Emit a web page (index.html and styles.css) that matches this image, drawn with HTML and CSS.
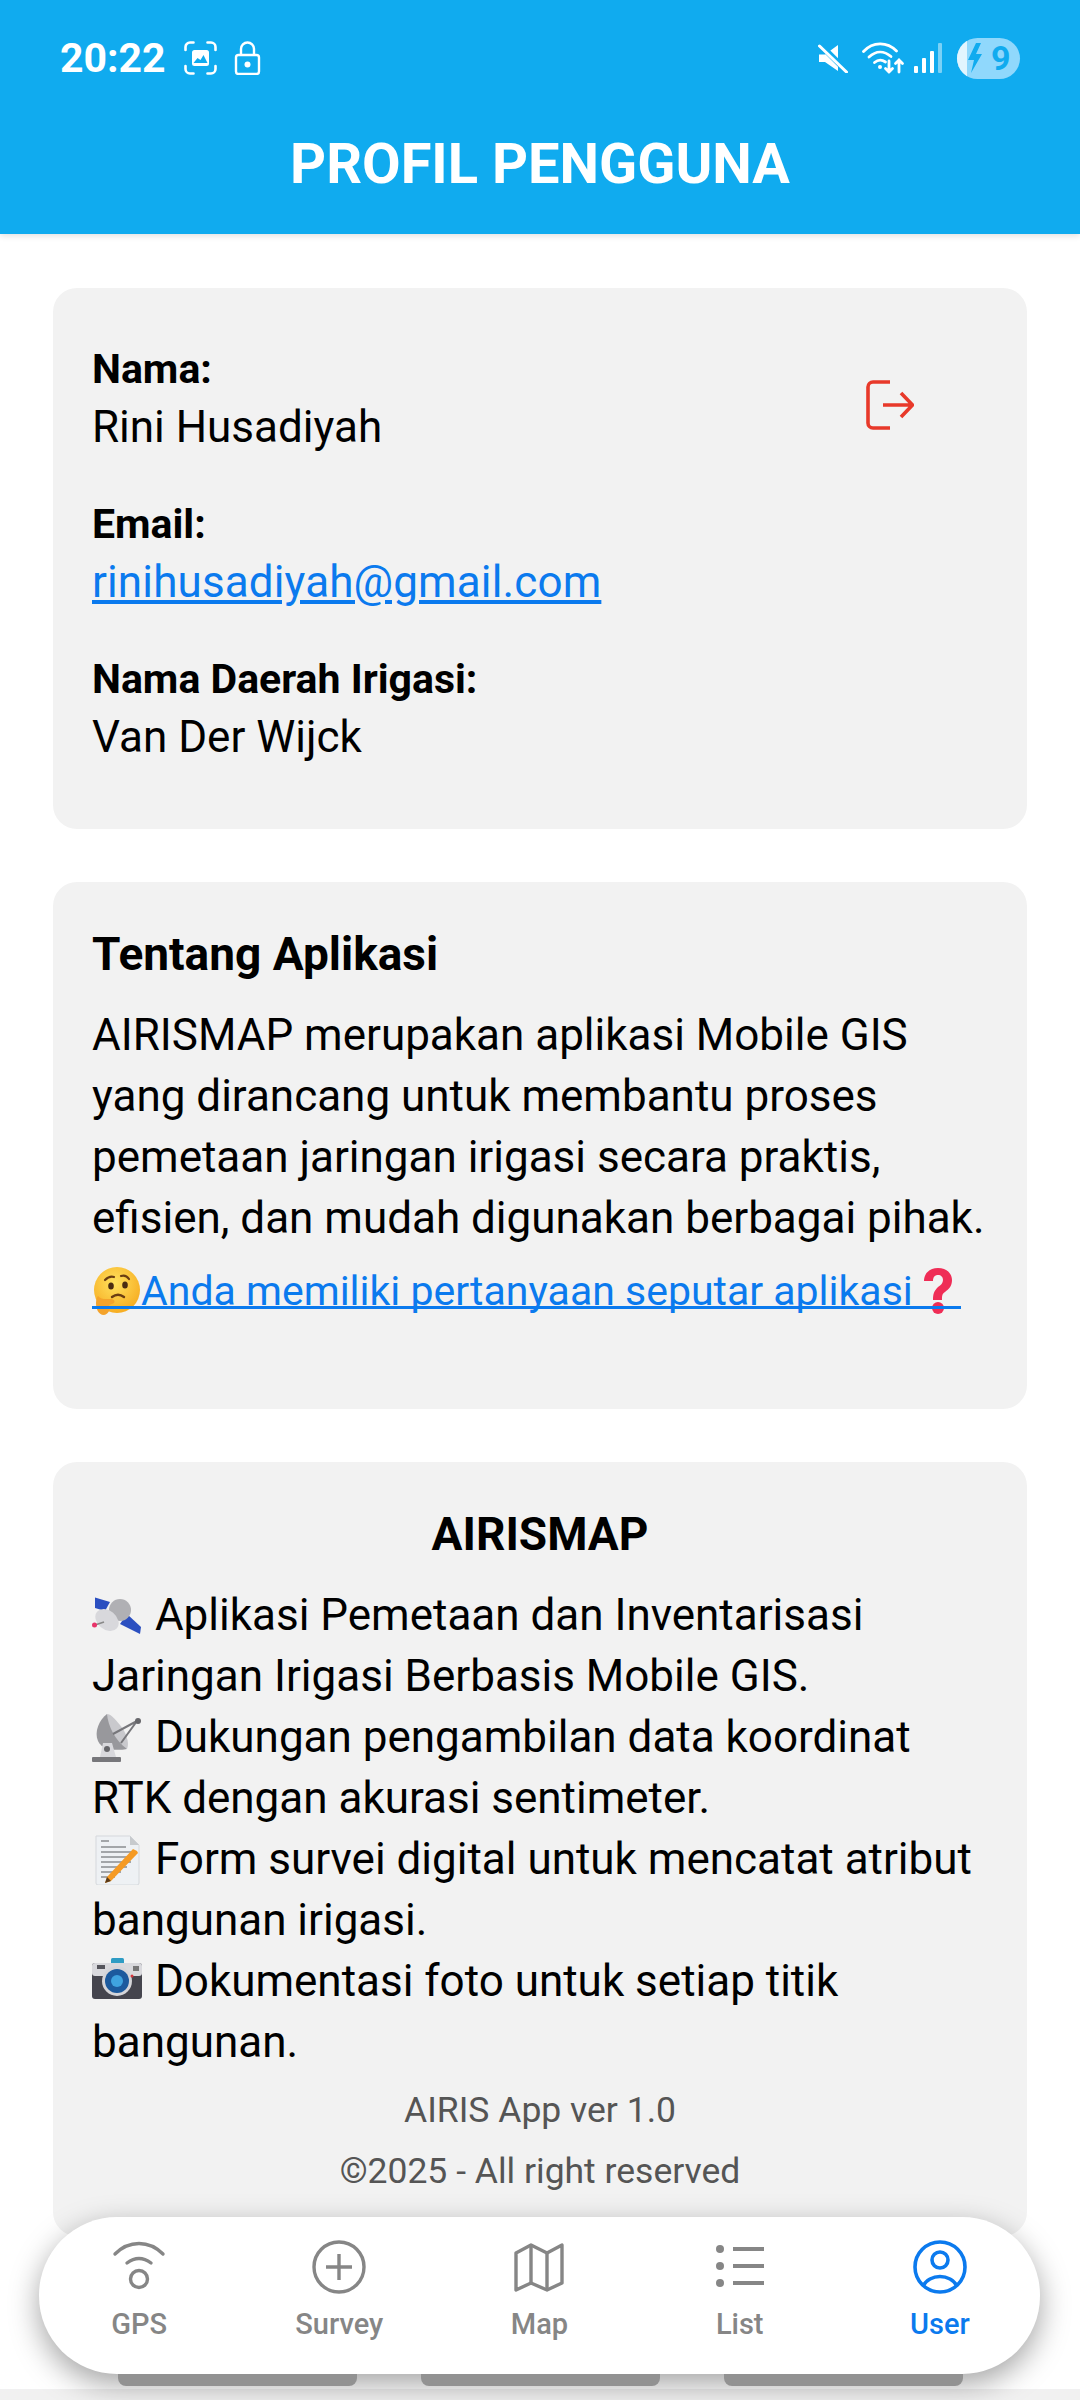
FILE: index.html
```html
<!DOCTYPE html>
<html lang="en">
<head>
    <meta charset="UTF-8">
    <meta name="viewport" content="width=device-width, initial-scale=1.0">
    <title>Profil Pengguna</title>
    <link rel="stylesheet" href="styles.css">
</head>
<body>
<div class="app">
    <header class="header">
        <div class="status-bar">
            <div class="status-left">
                <span class="time">20:22</span>
                <svg class="ic-scan" width="35" height="34" viewBox="0 0 34 34" fill="none" stroke="#fff" stroke-width="2.6" stroke-linecap="round">
                    <path d="M2 9V6a4.500 4.500 0 0 1 4.500-4.500H10M24 1.500h3.500A4.500 4.500 0 0 1 32 6v3M32 25v3a4.500 4.500 0 0 1-4.500 4.500H24M10 32.500H6.500A4.500 4.500 0 0 1 2 28v-3"/>
                    <rect x="8.500" y="9" width="17" height="16" rx="2.500" fill="#fff" stroke="none"/>
                    <path d="M10 22l4-5 3 2 3-5 4 8z" fill="#10abef" stroke="none"/>
                </svg>
                <svg class="ic-lock" width="27" height="34" viewBox="0 0 26 34" fill="none" stroke="#fff" stroke-width="2.4">
                    <path d="M6.500 14V8a6.500 6.500 0 0 1 13 0v6"/>
                    <rect x="1.500" y="14" width="23" height="19" rx="2.500"/>
                    <circle cx="13" cy="23.500" r="3" fill="#fff" stroke="none"/>
                </svg>
            </div>
            <div class="status-right">
                <svg width="30" height="30" viewBox="0 0 30 30">
                    <path d="M1 11.500h6L20 2v26L7 19H1z" fill="#fff"/>
                    <path d="M2 1.500L29 28.500" stroke="#10abef" stroke-width="6"/>
                    <path d="M1.500 3L28.500 29" stroke="#fff" stroke-width="3" stroke-linecap="round"/>
                </svg>
                <svg class="ic-wifi" width="43" height="32" viewBox="0 0 43 32" fill="none" stroke="#fff" stroke-width="2.800" stroke-linecap="round">
                    <path d="M1.500 9.500C11 -0.500 25 -0.500 34.500 9"/>
                    <path d="M7 15c7-6.500 15-6.500 22-0.500"/>
                    <path d="M12.500 20.500c3.500-3 7.500-3 11-0.500"/>
                    <circle cx="18" cy="25" r="2" fill="#fff" stroke="none"/>
                    <path d="M27 19v11M23.500 26.500L27 30l3.500-3.500M37 30V18M33.500 21.500L37 18l3.500 3.500"/>
                </svg>
                <svg class="ic-signal" width="28" height="30" viewBox="0 0 28 30">
                    <rect x="0" y="23" width="4" height="7" rx="1" fill="#fff"/>
                    <rect x="8" y="15" width="4" height="15" rx="1" fill="#fff"/>
                    <rect x="16" y="8" width="4" height="22" rx="1" fill="#fff"/>
                    <rect x="24" y="0" width="4" height="30" rx="1" fill="#fff" opacity=".45"/>
                </svg>
                <div class="battery">
                    <span class="battery-level"></span>
                    <svg class="ic-bolt" width="16" height="30" viewBox="0 0 16 30"><path d="M9 0L1 17h6l-3 13L15 11H9l5-11z" fill="#10abef"/></svg>
                    <span class="battery-num">9</span>
                </div>
            </div>
        </div>
        <h1 class="title">PROFIL PENGGUNA</h1>
    </header>

    <main class="content">
        <section class="card card-user">
            <div class="user-info">
                <div class="field">
                    <strong>Nama:</strong>
                    <span>Rini Husadiyah</span>
                </div>
                <div class="field">
                    <strong>Email:</strong>
                    <a href="#">rinihusadiyah@gmail.com</a>
                </div>
                <div class="field">
                    <strong>Nama Daerah Irigasi:</strong>
                    <span>Van Der Wijck</span>
                </div>
            </div>
            <svg class="ic-logout" width="48" height="50" viewBox="0 0 48 50" fill="none" stroke="#e8392a" stroke-width="3.600" stroke-linejoin="round">
                <path d="M24 2H7a5 5 0 0 0-5 5v36a5 5 0 0 0 5 5h17"/>
                <path d="M17 25h29M35 13l11.500 12L35 37"/>
            </svg>
        </section>

        <section class="card card-about">
            <h2>Tentang Aplikasi</h2>
            <p>AIRISMAP merupakan aplikasi Mobile GIS yang dirancang untuk membantu proses pemetaan jaringan irigasi secara praktis, efisien, dan mudah digunakan berbagai pihak.</p>
            <a class="faq" href="#"><svg class="emoji-think" width="49" height="48" viewBox="0 0 49 48">
                    <defs><radialGradient id="face" cx=".45" cy=".35" r=".7"><stop offset="0" stop-color="#ffe25e"/><stop offset="1" stop-color="#f6a91e"/></radialGradient></defs>
                    <circle cx="25" cy="23" r="23" fill="url(#face)"/>
                    <path d="M13 13c3-3 6-4 9-3M29 9c3-1 6 0 8 3" stroke="#6b3d12" stroke-width="2.200" fill="none" stroke-linecap="round"/>
                    <ellipse cx="19" cy="19" rx="2.800" ry="3.500" fill="#4a2c12"/>
                    <ellipse cx="33" cy="18" rx="2.800" ry="3.500" fill="#4a2c12"/>
                    <path d="M20 30c4-3 8-3 12 0" stroke="#6b3d12" stroke-width="2.400" fill="none" stroke-linecap="round"/>
                    <path d="M6 29c3 4 8 3 13 3 4 0 5 4 1 5l-3 1c2 3 0 9-5 10-6 0-8-7-8-12 0-3 1-6 2-7z" fill="#f4a32b"/>
                </svg>Anda memiliki pertanyaan seputar aplikasi <svg class="emoji-q" width="30" height="48" viewBox="0 0 30 48">
                    <path d="M1 14C1 6 7 1 15 1c8 0 14 5 14 12 0 6-3 9-7 12-3 2-3 4-3 8h-9c0-6 1-9 5-13 3-2 5-4 5-7s-2-5-5-5-5 2-5 6z" fill="#ef2d56"/>
                    <circle cx="15" cy="41" r="6" fill="#ef2d56"/>
                </svg></a>
        </section>

        <section class="card card-app">
            <h2 class="center">AIRISMAP</h2>
            <p><svg class="emoji" viewBox="0 0 50 50">
                    <path d="M3 6.500L18 11l-5 9-10-3z" fill="#2b4fc0"/>
                    <path d="M35 23l14 13-1 7-20-10z" fill="#2b4fc0"/>
                    <circle cx="28" cy="19" r="11" fill="#b0b0b4"/>
                    <ellipse cx="15" cy="29" rx="13" ry="9.500" transform="rotate(40 15 29)" fill="#d8d8dc"/>
                    <path d="M12 31L3 34" stroke="#888" stroke-width="1.600"/>
                    <circle cx="2.500" cy="34" r="2.500" fill="#e8346a"/>
                </svg> Aplikasi Pemetaan dan Inventarisasi Jaringan Irigasi Berbasis Mobile GIS.</p>
            <p><svg class="emoji" viewBox="0 0 50 50">
                    <path d="M15 1c-8 6-13 18-9 27s18 10 29 8z" fill="#98989c"/>
                    <path d="M15 1c1 12 8 26 20 35 3-6-1-17-7-24S19 1 15 1z" fill="#c9c9cd"/>
                    <path d="M21 21L45 8M29 30L45 8" stroke="#77777b" stroke-width="2"/>
                    <circle cx="46" cy="8" r="3" fill="#66666a"/>
                    <path d="M11 30h9l4 14H8z" fill="#d8d8dc"/>
                    <circle cx="15" cy="36" r="3" fill="#66666a"/>
                    <rect x="0" y="44" width="29" height="5" rx="1" fill="#77777b"/>
                </svg> Dukungan pengambilan data koordinat RTK dengan akurasi sentimeter.</p>
            <p><svg class="emoji" viewBox="0 0 50 50">
                    <path d="M4 1h34l9 9v38a2 2 0 0 1-2 2H6a2 2 0 0 1-2-2z" fill="#eef1f4" stroke="#d5d8dc"/>
                    <path d="M38 1l9 9h-9z" fill="#c7cacd"/>
                    <path d="M9 6h8M9 12h25M9 17h30M9 22h30M9 27h30M9 32h26M9 37h20M9 42h14" stroke="#8a8d90" stroke-width="1.500"/>
                    <path d="M45 16l-4-2-26 28-2 6 6-2 27-28z" fill="#f59a23"/>
                    <path d="M15 42l-2 6 6-2z" fill="#5a3a1a"/>
                </svg> Form survei digital untuk mencatat atribut bangunan irigasi.</p>
            <p><svg class="emoji" viewBox="0 0 50 50">
                    <rect x="19" y="1" width="13" height="7" rx="1.500" fill="#2e9cc4"/>
                    <rect x="0" y="6" width="50" height="36" rx="3" fill="#45454e"/>
                    <rect x="0" y="6" width="50" height="13" rx="3" fill="#d9d9dd"/>
                    <rect x="5" y="8" width="8" height="4" fill="#55555c"/>
                    <rect x="41" y="9" width="6" height="5" fill="#777"/>
                    <circle cx="25" cy="24" r="15" fill="#d5d5d9"/>
                    <circle cx="25" cy="24" r="12" fill="#1c5a9e"/>
                    <circle cx="25" cy="24" r="6" fill="#3fa3e0"/>
                    <circle cx="40" cy="19" r="1.500" fill="#d6343c"/>
                </svg> Dokumentasi foto untuk setiap titik bangunan.</p>
            <div class="app-footer">
                <div>AIRIS App ver 1.0</div>
                <div>©2025 - All right reserved</div>
            </div>
        </section>
    </main>

    <nav class="bottom-nav">
        <a class="nav-item" href="#">
            <svg width="56" height="56" viewBox="0 0 56 56" fill="none" stroke="currentColor" stroke-width="3.400" stroke-linecap="round">
                <path d="M4 15C18 1 38 1 52 15"/>
                <path d="M16 24c8-6 16-6 24 0"/>
                <circle cx="28" cy="40" r="8.500"/>
            </svg>
            <span>GPS</span>
        </a>
        <a class="nav-item" href="#">
            <svg width="56" height="56" viewBox="0 0 56 56" fill="none" stroke="currentColor" stroke-width="3.400">
                <circle cx="28" cy="28" r="25"/>
                <path d="M28 15v26M15 28h26"/>
            </svg>
            <span>Survey</span>
        </a>
        <a class="nav-item" href="#">
            <svg width="56" height="56" viewBox="0 0 56 56" fill="none" stroke="currentColor" stroke-width="3.400" stroke-linejoin="round">
                <path d="M5 14l15-8 16 8 15-8v38l-15 7-16-7-15 7z"/>
                <path d="M20 6v38M36 14v37"/>
            </svg>
            <span>Map</span>
        </a>
        <a class="nav-item" href="#">
            <svg width="56" height="56" viewBox="0 0 56 56" fill="none" stroke="currentColor" stroke-width="4">
                <path d="M21 10h31M21 27h31M21 44h31"/>
                <circle cx="8" cy="10" r="4" fill="currentColor" stroke="none"/>
                <circle cx="8" cy="27" r="4" fill="currentColor" stroke="none"/>
                <circle cx="8" cy="44" r="4" fill="currentColor" stroke="none"/>
            </svg>
            <span>List</span>
        </a>
        <a class="nav-item active" href="#">
            <svg width="56" height="56" viewBox="0 0 56 56" fill="none" stroke="currentColor" stroke-width="3.600">
                <circle cx="28" cy="28" r="25"/>
                <circle cx="28" cy="21" r="8"/>
                <path d="M11 47c3-6 10-9.500 17-9.500s14 3.500 17 9.500"/>
            </svg>
            <span>User</span>
        </a>
    </nav>

    <div class="tab-strip">
        <span></span><span></span><span></span>
    </div>
</div>
</body>
</html>
```

FILE: styles.css
```css
* { box-sizing: border-box; }
html, body { margin: 0; padding: 0; }
body {
    width: 1080px;
    height: 2400px;
    overflow: hidden;
    background: #fff;
    font-family: Roboto, "Noto Sans", sans-serif;
    color: #000;
}
a { color: #0b7aee; }

.app {
    position: relative;
    display: flex;
    flex-direction: column;
    height: 2400px;
}

/* header */
.header {
    flex: none;
    height: 234px;
    background: #10abef;
    color: #fff;
    box-shadow: 0 2px 6px rgba(0,0,0,0.12);
    position: relative;
    z-index: 1;
}
.status-bar {
    display: flex;
    justify-content: space-between;
    align-items: center;
    height: 116px;
    padding: 0 60px;
}
.status-left, .status-right { display: flex; align-items: center; }
.time { font-size: 41px; font-weight: 700; width: 123px; }
.ic-lock { margin-left: 16px; }
.status-right svg { flex: none; }
.ic-wifi { margin-left: 14px; }
.ic-signal { margin-left: 9px; }
.battery {
    position: relative;
    display: flex;
    align-items: center;
    width: 63px;
    height: 41px;
    margin-left: 15px;
    border-radius: 21px;
    overflow: hidden;
    background: #90d8fc;
    padding-left: 10px;
}
.battery-level {
    position: absolute;
    left: 0;
    top: 0;
    bottom: 0;
    width: 10px;
    background: #e2f5fe;
}
.ic-bolt { position: relative; }
.battery-num {
    font-size: 34px;
    font-weight: 700;
    color: #10abef;
    margin-left: 8px;
}
.title {
    margin: 0;
    text-align: center;
    font-size: 56px;
    font-weight: 700;
    line-height: 96px;
}

/* cards */
.content {
    flex: 1;
    overflow: hidden;
    padding: 54px 53px 0;
    display: flex;
    flex-direction: column;
    gap: 53px;
}
.card {
    flex: none;
    background: #f2f2f2;
    border-radius: 24px;
    padding: 0 39px;
}
.card h2 {
    margin: 0;
    font-size: 46px;
    font-weight: 700;
    line-height: 61px;
}
.card h2.center { text-align: center; }
.card p {
    margin: 0;
    font-size: 44px;
    line-height: 61px;
}

.card-user {
    display: flex;
    height: 541px;
    padding-top: 52px;
}
.user-info { flex: 1; }
.field {
    display: flex;
    flex-direction: column;
    align-items: flex-start;
    font-size: 44px;
    line-height: 58px;
    margin-bottom: 39px;
}
.field a { letter-spacing: 0.13px; }
.field strong { font-weight: 700; font-size: 41px; }
.ic-logout { margin: 40px 74px 0 0; }

.card-about { height: 527px; padding-top: 42px; }
.card-about h2 { margin-bottom: 20px; }
.faq {
    position: relative;
    display: inline-block;
    font-size: 41px;
    line-height: 60px;
    margin-top: 12px;
    text-decoration: none;
}
/* the underline runs across the emoji as well */
.faq::after {
    content: "";
    position: absolute;
    left: 0;
    right: 0;
    top: 45px;
    height: 3px;
    background: #0b7aee;
}
.emoji-think { vertical-align: -10px; }
.emoji-q { vertical-align: -10px; margin-right: 8px; }

.card-app { height: 774px; padding-top: 42px; }
.card-app h2 { margin-bottom: 20px; }
.emoji {
    width: 50px;
    height: 50px;
    margin-right: 2px;
    vertical-align: -11px;
}
.app-footer {
    margin-top: 7px;
    text-align: center;
    font-size: 35.5px;
    line-height: 61px;
    color: #555;
}

/* bottom navigation lies over the last card */
.bottom-nav {
    position: absolute;
    left: 39px;
    top: 2217px;
    width: 1001px;
    height: 157px;
    background: #fff;
    border-radius: 78px;
    box-shadow: 0 10px 30px rgba(0,0,0,0.36);
    display: grid;
    grid-template-columns: repeat(5, 1fr);
    z-index: 2;
}
.nav-item {
    display: flex;
    flex-direction: column;
    align-items: center;
    padding-top: 22px;
    color: #868686;
    text-decoration: none;
    font-size: 29px;
    font-weight: 500;
}
.nav-item span { margin-top: 12px; }
.nav-item.active { color: #0b7aee; }

.tab-strip {
    flex: none;
    height: 26px;
    display: flex;
    justify-content: center;
    gap: 64px;
    background: linear-gradient(transparent 0 15px, #f1f1f1 15px);
    align-items: flex-start;
}
.tab-strip span {
    position: relative;
    z-index: 3;
    width: 239px;
    height: 12px;
    background: #929292;
    border-radius: 0 0 8px 8px;
}
```
